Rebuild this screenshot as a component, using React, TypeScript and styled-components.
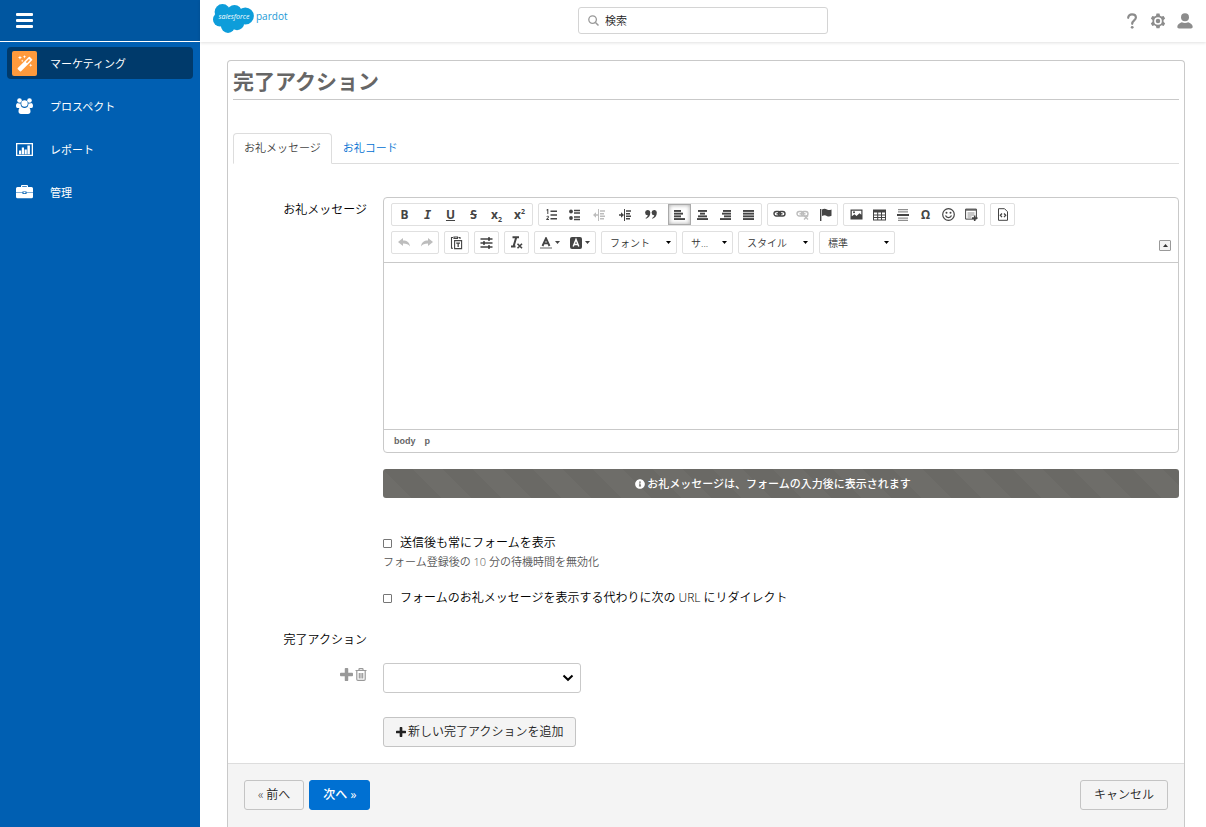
import React from "react";
import styled, { createGlobalStyle, css } from "styled-components";
import { FaInfoCircle } from "react-icons/fa";

const GlobalStyle = createGlobalStyle`
  *, *::before, *::after { box-sizing: border-box; }
  body {
    margin: 0;
    background: #fff;
    color: #000;
    font-family: "Open Sans", "Noto Sans CJK JP", sans-serif;
    font-size: 12px;
    font-weight: 350;
    line-height: 20px;
  }
  button, input, select { font-family: inherit; font-weight: inherit; margin: 0; }
  svg { display: block; flex: none; }
`;

/* ---------- page frame ---------- */

const Page = styled.div`
  display: flex;
  min-height: 100vh;
`;

const Sidebar = styled.aside`
  flex: 0 0 200px;
  background: #005fb2;
`;

const SidebarTop = styled.div`
  display: flex;
  align-items: center;
  height: 42px;
  padding: 0 16px 1px;
  background: #0056a0;
  border-bottom: 1px solid #fff;
`;

const MenuButton = styled.button`
  padding: 0;
  border: 0;
  background: none;
  color: #fff;
  cursor: pointer;
`;

const Nav = styled.nav`
  display: flex;
  flex-direction: column;
  gap: 11px;
  padding: 5px 7px;
`;

const NavLink = styled.a<{ $active?: boolean }>`
  display: flex;
  align-items: center;
  gap: 13px;
  height: 32px;
  padding-left: 5px;
  border-radius: 4px;
  color: #fff;
  font-size: 11px;
  line-height: 22px;
  font-weight: 400;
  text-decoration: none;
  background: ${(p) => (p.$active ? "#003a6b" : "transparent")};
`;

const NavText = styled.span`
  padding-top: 1px;
`;

const NavIcon = styled.span<{ $active?: boolean }>`
  display: flex;
  align-items: center;
  justify-content: center;
  width: 25px;
  height: 25px;
  border-radius: 2px;
  background: ${(p) => (p.$active ? "#ff9a3c" : "transparent")};
`;

const Content = styled.div`
  flex: 1;
  min-width: 0;
  display: flex;
  flex-direction: column;
`;

const TopBar = styled.header`
  display: grid;
  grid-template-columns: 1fr 250px 1fr;
  align-items: center;
  height: 42px;
  padding-bottom: 1px;
  background: #fff;
  box-shadow: 0 1px 3px rgba(0, 0, 0, 0.12);
`;

const Brand = styled.a`
  display: flex;
  align-items: center;
  gap: 2px;
  height: 37px;
  padding-left: 13px;
  align-self: start;
  color: #1b9ad6;
  font-family: "Open Sans", sans-serif;
  font-size: 10px;
  font-weight: 400;
  text-decoration: none;
`;

const BrandName = styled.span`
  padding-bottom: 5px;
`;

const SearchBox = styled.label`
  display: flex;
  align-items: center;
  gap: 6px;
  height: 27px;
  padding: 0 9px;
  border: 1px solid #d4d4d4;
  border-radius: 3px;
`;

const SearchInput = styled.input`
  flex: 1;
  min-width: 0;
  padding: 0;
  border: 0;
  outline: 0;
  font-size: 11px;
  line-height: 20px;
  &::placeholder { color: #222; opacity: 1; }
`;

const Utilities = styled.div`
  display: flex;
  justify-content: flex-end;
  gap: 10px;
  padding-right: 12px;
`;

const UtilityButton = styled.button`
  padding: 0;
  border: 0;
  background: none;
  color: #8c8c8c;
  cursor: pointer;
`;

/* ---------- panel ---------- */

const Panel = styled.form`
  flex: 1;
  display: flex;
  flex-direction: column;
  margin: 18px 21px 0 27px;
  border: 1px solid #c9c9c9;
  border-bottom: 0;
  border-radius: 4px 4px 0 0;
`;

const PanelBody = styled.div`
  padding: 0 5px 16px;
`;

const Title = styled.h1`
  margin: 0 0 33px;
  padding-top: 2px;
  border-bottom: 1px solid #c9c9c9;
  color: #666;
  font-size: 21px;
  line-height: 36px;
  font-weight: 700;
`;

const Tabs = styled.div`
  display: flex;
  height: 31px;
  margin-bottom: 33px;
  border-bottom: 1px solid #ddd;
`;

const Tab = styled.a<{ $active?: boolean }>`
  height: 31px;
  padding: 0 10px;
  border: 1px solid transparent;
  border-radius: 4px 4px 0 0;
  color: #0070d2;
  font-size: 11px;
  line-height: 28px;
  text-decoration: none;
  ${(p) =>
    p.$active &&
    css`
      border-color: #ddd;
      border-bottom-color: #fff;
      background: #fff;
      color: #444;
    `}
`;

const FormRow = styled.div<{ $gap?: number }>`
  display: grid;
  grid-template-columns: 134px minmax(0, 1fr);
  column-gap: 16px;
  margin-top: ${(p) => p.$gap ?? 0}px;
`;

const RowLabel = styled.div<{ $top?: number }>`
  padding-top: ${(p) => p.$top ?? 0}px;
  text-align: right;
`;

const FieldColumn = styled.div`
  grid-column: 2;
`;

/* ---------- editor ---------- */

const Editor = styled.div`
  border: 1px solid #c9c9c9;
  border-radius: 4px;
`;

const Toolbar = styled.div`
  display: flex;
  align-items: flex-end;
  justify-content: space-between;
  padding: 5px 7px 8px;
  border-bottom: 1px solid #c9c9c9;
`;

const ToolRows = styled.div`
  display: flex;
  flex-direction: column;
  gap: 5px;
`;

const ToolRow = styled.div`
  display: flex;
  flex-wrap: wrap;
  gap: 5px;
`;

const ToolGroup = styled.div<{ $tight?: boolean }>`
  display: flex;
  height: 23px;
  padding: 0 ${(p) => (p.$tight ? 0 : 1)}px;
  border: 1px solid #e0e0e0;
  border-radius: 2px;
`;

const ToolButton = styled.button<{ $wide?: boolean; $on?: boolean; $off?: boolean }>`
  display: flex;
  align-items: center;
  justify-content: center;
  gap: 3px;
  width: ${(p) => (p.$wide ? 26 : 23)}px;
  height: 21px;
  padding: 0;
  border: 0;
  background: none;
  color: ${(p) => (p.$off ? "#bdbdbd" : "#444")};
  ${(p) =>
    p.$on &&
    css`
      border: 1px solid #aaa;
      box-shadow: inset 0 0 4px rgba(0, 0, 0, 0.35);
    `}
`;

const ColorButton = styled(ToolButton)`
  width: 30px;
`;

const AlignSet = styled.div`
  display: flex;
  margin-left: 4px;
`;

const Glyph = styled.span<{ $italic?: boolean; $line?: "underline" | "line-through"; $mono?: boolean }>`
  font-family: ${(p) => (p.$mono ? '"DejaVu Sans Mono", monospace' : '"Noto Sans", sans-serif')};
  font-size: 12px;
  line-height: 16px;
  font-weight: 700;
  font-style: ${(p) => (p.$italic ? "italic" : "normal")};
  text-decoration: ${(p) => p.$line ?? "none"};
  sub, sup { font-size: 7px; line-height: 0; }
`;

const ComboWrap = styled.div<{ $small?: boolean }>`
  display: grid;
  align-items: center;
  width: ${(p) => (p.$small ? 51 : 76)}px;
  height: 23px;
  border: 1px solid #e0e0e0;
  border-radius: 2px;
  & > * { grid-area: 1 / 1; }
  & > svg { justify-self: end; margin-right: 5px; pointer-events: none; }
`;

const ComboSelect = styled.select`
  appearance: none;
  width: 100%;
  height: 21px;
  padding: 0 12px 0 8px;
  border: 0;
  background: none;
  color: #333;
  font-size: 10px;
`;

const CollapseButton = styled.button`
  display: flex;
  align-items: center;
  justify-content: center;
  width: 12px;
  height: 11px;
  margin-bottom: 3px;
  padding: 0;
  border: 1px solid #999;
  border-radius: 1px;
  background: #f3f3f3;
  color: #333;
`;

const EditArea = styled.div`
  height: 166px;
  outline: 0;
`;

const ElementPath = styled.div`
  display: flex;
  gap: 9px;
  padding: 0 10px;
  border-top: 1px solid #c9c9c9;
  color: #666;
  font-family: "Liberation Sans", sans-serif;
  font-size: 9px;
  font-weight: 700;
  line-height: 22px;
`;

const Notice = styled.div`
  display: flex;
  align-items: center;
  justify-content: center;
  gap: 2px;
  height: 29px;
  margin: 16px 0 35px;
  padding-right: 16px;
  border-radius: 3px;
  color: #fff;
  font-size: 11px;
  font-weight: 500;
  background-color: #6e6d69;
  background-image: linear-gradient(
    45deg,
    rgba(0, 0, 0, 0.04) 25%,
    transparent 25%,
    transparent 50%,
    rgba(0, 0, 0, 0.04) 50%,
    rgba(0, 0, 0, 0.04) 75%,
    transparent 75%,
    transparent
  );
  background-size: 60px 60px;
`;

/* ---------- fields ---------- */

const CheckLabel = styled.label`
  display: flex;
  align-items: center;
  gap: 8px;
`;

const Check = styled.input`
  appearance: none;
  width: 9px;
  height: 9px;
  border: 1px solid #767676;
  border-radius: 1px;
  background: #fff;
  &:checked { background: #0070d2; }
`;

const Help = styled.p`
  margin: 0 0 17px;
  color: #555;
  font-size: 11px;
  line-height: 18px;
`;

const RowTools = styled.div`
  display: flex;
  justify-content: flex-end;
  gap: 2px;
  padding-top: 4px;
`;

const SmallIconButton = styled.button`
  height: 14px;
  padding: 0;
  border: 0;
  background: none;
  color: #999;
`;

const SelectWrap = styled.div`
  display: grid;
  align-items: center;
  width: 198px;
  & > * { grid-area: 1 / 1; }
  & > svg { justify-self: end; margin-right: 7px; pointer-events: none; }
`;

const ActionSelect = styled.select`
  appearance: none;
  width: 100%;
  height: 30px;
  padding: 0 24px 0 8px;
  border: 1px solid #c9c9c9;
  border-radius: 3px;
  background: #fff;
  font-size: 12px;
`;

const Button = styled.button<{ $primary?: boolean; $snug?: boolean }>`
  display: inline-flex;
  align-items: center;
  justify-content: center;
  gap: 2px;
  height: 30px;
  padding: 0 ${(p) => (p.$snug ? 12 : 13)}px;
  border: 1px solid ${(p) => (p.$primary ? "#0070d2" : "#c4c4c4")};
  border-radius: 3px;
  background: ${(p) => (p.$primary ? "#0070d2" : "#f4f4f4")};
  color: ${(p) => (p.$primary ? "#fff" : "#222")};
  font-size: 12px;
  font-weight: ${(p) => (p.$primary ? 500 : 350)};
  line-height: 20px;
  white-space: nowrap;
  cursor: pointer;
`;

const Footer = styled.footer`
  flex: 1;
  display: flex;
  align-items: flex-start;
  justify-content: space-between;
  padding: 16px;
  border-top: 1px solid #ddd;
  background: #f4f4f4;
`;

const ButtonSet = styled.div`
  display: flex;
  gap: 5px;
`;

/* ---------- drawings ---------- */

const Svg = ({ w = 14, h = 14, box, children }: { w?: number; h?: number; box?: string; children: React.ReactNode }) => (
  <svg width={w} height={h} viewBox={box ?? `0 0 ${w} ${h}`} fill="currentColor" aria-hidden="true">
    {children}
  </svg>
);

const Caret = () => (
  <Svg w={5} h={3}>
    <path d="M0 0h5L2.500 3z" />
  </Svg>
);

const Cloud = () => (
  <svg width="41" height="29" viewBox="0 0 41 29" aria-hidden="true">
    <g fill="#0d9dda">
      <circle cx="9.500" cy="8" r="7.900" />
      <circle cx="21.500" cy="8.200" r="7.300" />
      <circle cx="32.300" cy="12" r="8.600" />
      <circle cx="7" cy="15.500" r="7" />
      <circle cx="15" cy="21.800" r="7.100" />
      <circle cx="24" cy="19" r="7.200" />
      <path d="M9 6h22v14H9z" />
    </g>
    <text x="21" y="15" fill="#fff" fontFamily="Open Sans, sans-serif" fontStyle="italic" fontWeight="400" fontSize="7" textAnchor="middle">
      salesforce
    </text>
  </svg>
);

const Lines = ({ rows }: { rows: [number, number][] }) => (
  <Svg w={11} h={10}>
    {rows.map(([x, w], i) => (
      <rect key={i} x={x} y={i * 2.7} width={w} height="1.9" />
    ))}
  </Svg>
);

const alignments = [
  { name: "左揃え", rows: [[0, 7], [0, 9], [0, 7], [0, 11]] },
  { name: "中央揃え", rows: [[1, 9], [3, 5], [1, 9], [0, 11]] },
  { name: "右揃え", rows: [[3, 8], [2, 9], [4, 7], [0, 11]] },
  { name: "両端揃え", rows: [[0, 11], [0, 11], [0, 11], [0, 11]] },
] as { name: string; rows: [number, number][] }[];

const NumberedIcon = () => (
  <Svg w={12} h={12}>
    <path d="M4.500 1.500H11V3H4.500zM4.500 5.200H11v1.500H4.500zM4.500 9H11v1.500H4.500zM1.300 0h1v5h-1V1.500H.5V.8zM.4 7.500C.8 6.300 3 6.400 2.900 8c0 .8-.8 1.500-1.200 2.100H3v1H.2v-.8C1 9.300 1.900 8.500 1.900 8c0-.6-.7-.5-.9 0z" />
  </Svg>
);

const BulletIcon = () => (
  <Svg w={12} h={12}>
    <circle cx="2" cy="2.500" r="1.900" />
    <circle cx="2" cy="9" r="1.900" />
    <path d="M5 .7h6v1.500H5zM5 3.200h6v1.500H5zM5 7.200h6v1.500H5zM5 9.700h6v1.500H5z" />
  </Svg>
);

const IndentIcon = ({ out }: { out?: boolean }) => (
  <Svg w={12} h={12}>
    <path d="M5 0h1v12H5zM7 1.300h5v1.500H7zM7 3.900h4v1.500H7zM7 6.500h5V8H7zM7 9.100h4v1.500H7z" />
    <path d={out ? "M0 6l3-2.800v2h2v1.600H3v2z" : "M5 6L2 3.200v2H0v1.600h2v2z"} />
  </Svg>
);

const QuoteIcon = () => (
  <Svg w={12} h={9}>
    <path d="M2.600 0a2.600 2.600 0 0 1 2.700 2.800C5.300 5.600 3.800 8 1 8.800L.5 8c1.400-.6 2.200-1.600 2.300-2.800A2.600 2.600 0 1 1 2.600 0zM9.100 0a2.600 2.600 0 0 1 2.700 2.800c0 2.800-1.500 5.200-4.300 6L7 8c1.400-.6 2.200-1.600 2.300-2.800A2.600 2.600 0 1 1 9.100 0z" />
  </Svg>
);

const ChainIcon = ({ cut }: { cut?: boolean }) => (
  <Svg w={13} h={11}>
    <g fill="none" stroke="currentColor" strokeWidth="1.400">
      <rect x="1" y="2.500" width="6.500" height="4.500" rx="2.200" />
      <rect x="5.500" y="2.500" width="6.500" height="4.500" rx="2.200" />
      <path d="M3.500 4.800h6" />
      {cut && <path d="M8 6.500l4 4M12 6.500l-4 4" />}
    </g>
  </Svg>
);

const FlagIcon = () => (
  <Svg w={13} h={13}>
    <path d="M1 1h1.400v12H1zM3 1.500c2-1.200 3.500-.8 5 0s2.500.8 4.500 0v6.300c-2 1-3.300.8-4.700.1s-2.800-.8-4.800.2z" />
  </Svg>
);

const ImageIcon = () => (
  <Svg w={13} h={11}>
    <path fillRule="evenodd" d="M.5.500h12v10H.5zM1.800 1.800v5.400l2.700-2 2 1.800 3-2.800 1.800 1.500V1.800z" />
    <circle cx="4" cy="3.300" r="1" />
  </Svg>
);

const TableIcon = () => (
  <Svg w={13} h={12}>
    <path fillRule="evenodd" d="M0 .5h13v11H0zM1 3.500v2h3.200v-2zm4.200 0v2h2.800v-2zm3.800 0v2h3v-2zM1 6.500V8h3.200V6.500zm4.200 0V8h2.800V6.500zm3.800 0V8h3V6.500zM1 9v1.500h3.200V9zm4.200 0v1.500h2.800V9zM9 9v1.500h3V9z" />
  </Svg>
);

const RuleIcon = () => (
  <Svg w={12} h={12}>
    <path opacity=".6" d="M1 0h10v1.300H1zM1 2.200h10v1.300H1zM1 8.500h10v1.300H1zM1 10.700h10V12H1z" />
    <path d="M0 5h12v2H0z" />
  </Svg>
);

const SmileIcon = () => (
  <Svg w={13} h={13}>
    <circle cx="6.500" cy="6.500" r="5.800" fill="none" stroke="currentColor" strokeWidth="1.200" />
    <circle cx="4.500" cy="4.800" r="1" />
    <circle cx="8.500" cy="4.800" r="1" />
    <path d="M3.500 7.500c1 2.700 5 2.700 6 0" fill="none" stroke="currentColor" strokeWidth="1.200" />
  </Svg>
);

const SnippetIcon = () => (
  <Svg w={13} h={13}>
    <path d="M.6 1.100h10.800v10H.6z" fill="none" stroke="currentColor" />
    <path opacity=".6" d="M1 1h10v2H1zM2.500 4.500h7v1h-7zM2.500 6.500h7v1h-7zM2.500 8.500h4v1h-4z" />
    <path d="M8.900 7.500h1.600V9.300h2v1.600h-2v2H8.900v-2H7V9.300h1.900z" />
  </Svg>
);

const SourceIcon = () => (
  <Svg w={12} h={13}>
    <path d="M1.500.7h6l3 3v8.600h-9z" fill="none" stroke="currentColor" />
    <path d="M5 5.500L3.300 7.300 5 9.100M7 5.500l1.700 1.800L7 9.100" fill="none" stroke="currentColor" strokeWidth="1.300" />
  </Svg>
);

const ArrowIcon = ({ back }: { back?: boolean }) => (
  <Svg w={12} h={9}>
    <path d={back ? "M5 0v2.500c4 0 6.500 1.800 7 6-1.500-2.200-3.500-2.900-7-2.900V8L0 4z" : "M7 0v2.500c-4 0-6.500 1.800-7 6 1.500-2.200 3.500-2.900 7-2.900V8l5-4z"} />
  </Svg>
);

const PasteIcon = () => (
  <Svg w={13} h={14}>
    <path d="M3 1.500H1.500v10.800H3M8.500 1.500H10V3M4 2.500V1h3.500v1.500z" fill="none" stroke="currentColor" strokeWidth="1.100" />
    <path d="M4.600 4.600h7v8h-7z" fill="none" stroke="currentColor" strokeWidth="1.100" />
    <path d="M6.200 6.500H10v1.300H8.800v3.300H7.500V7.800H6.200z" />
  </Svg>
);

const SlidersIcon = () => (
  <Svg w={13} h={12}>
    <path d="M.5 1.200h12v1.600H.5zM.5 5.200h12v1.600H.5zM.5 9.200h12v1.600H.5z" />
    <path d="M8 .2h2v3.600H8zM3 4.200h2v3.600H3zM8 8.200h2v3.600H8z" />
  </Svg>
);

const ClearFormatIcon = () => (
  <Svg w={13} h={13}>
    <path d="M2.500 1.200H9M1 10.500h4.500M6.200 1.500L3.600 10.300" fill="none" stroke="currentColor" strokeWidth="2" />
    <path d="M7.500 7.800l4.500 4.500M12 7.800l-4.500 4.500" fill="none" stroke="currentColor" strokeWidth="1.600" />
  </Svg>
);

const PlusIcon = ({ size = 12 }: { size?: number }) => (
  <Svg w={size} h={size} box="0 0 12 12">
    <path d="M4.400.800q0-.8.800-.8h1.600q.8 0 .8.800v3.600h3.600q.8 0 .8.800v1.600q0 .8-.8.800H7.600v3.600q0 .8-.8.800H5.200q-.8 0-.8-.8V7.600H.8Q0 7.600 0 6.800V5.200q0-.8.800-.8h3.600z" />
  </Svg>
);

const TrashIcon = () => (
  <Svg w={12} h={13}>
    <path d="M.5 2.500h11M4 2.500v-1.200Q4 .6 4.700.6h2.600q.7 0 .7.700v1.200M1.800 3v8.200q0 1.200 1.200 1.200h6q1.200 0 1.200-1.200V3M4.300 5v5.500M6 5v5.500M7.700 5v5.500" fill="none" stroke="currentColor" strokeWidth="1.200" />
  </Svg>
);

const navItems = [
  {
    label: "マーケティング",
    active: true,
    icon: (
      <Svg w={17} h={17} box="0 0 15 15">
        <path fillRule="evenodd" d="M11.300 1.800q.5-.5 1 0l1.900 1.900q.5.500 0 1L4.500 14.400q-.5.500-1 0L1.600 12.500q-.5-.5 0-1zM11.400 3.500L8.700 6.200l1 1 2.700-2.700z" />
        <path d="M3.500.5l.5 1.300 1.300.5L4 2.800l-.5 1.300L3 2.800l-1.300-.5L3 1.800zM7.500 0l.4 1.100 1.100.4-1.100.4L7.500 3l-.4-1.100L6 1.500l1.100-.4zM13 7.500l.4 1.100 1.100.4-1.100.4L13 10.500l-.4-1.100-1.100-.4 1.100-.4zM5.500 4l.3.900.9.300-.9.300-.3.900-.3-.9-.9-.3.900-.3z" />
      </Svg>
    ),
  },
  {
    label: "プロスペクト",
    icon: (
      <Svg w={17} h={16}>
        <circle cx="3.500" cy="2.500" r="2.300" />
        <circle cx="13.500" cy="2.500" r="2.300" />
        <circle cx="8.500" cy="5.500" r="3.200" />
        <path d="M0 8c0-2 .8-3 2-3 .8.600 1.700.7 2.600.4C4.500 7 5 8 5.700 8.700c-1 .3-1.600.8-2 1.300H1.500Q0 10 0 8zM17 8c0-2-.8-3-2-3-.8.600-1.700.7-2.600.4C12.500 7 12 8 11.300 8.700c1 .3 1.600.8 2 1.300h2.200Q17 10 17 8zM2.500 13.500c0-2.800 1-4.400 3.200-4.400 1.700 1.300 3.900 1.300 5.600 0 2.200 0 3.200 1.600 3.200 4.400 0 1.600-1 2.500-2.500 2.500H5c-1.500 0-2.500-.9-2.500-2.500z" />
      </Svg>
    ),
  },
  {
    label: "レポート",
    icon: (
      <Svg w={17} h={13}>
        <path fillRule="evenodd" d="M0 0h17v13H0zM1.300 1.300v10.400h14.400V1.300z" />
        <path d="M3 7.500h2.200v3.700H3zM5.800 4.500H8v6.700H5.800zM8.600 6.500h2.200v4.700H8.600zM11.400 2.500h2.500v8.700h-2.500z" />
      </Svg>
    ),
  },
  {
    label: "管理",
    icon: (
      <Svg w={17} h={14}>
        <path fillRule="evenodd" d="M5 2V1q0-1 1-1h5q1 0 1 1v1h3.500Q17 2 17 3.500V7h-6.500V6.500h-4V7H0V3.500Q0 2 1.500 2zM6.200 1.200V2h4.600v-.8zM0 7.600h6.500v1.400h4V7.600H17v4.100q0 1.500-1.500 1.500h-14Q0 13.200 0 11.700zM7.500 6.900h2v1.300h-2z" />
      </Svg>
    ),
  },
];

const Combo = ({ name, value, small }: { name: string; value: string; small?: boolean }) => (
  <ComboWrap $small={small}>
    <ComboSelect aria-label={name}>
      <option>{value}</option>
    </ComboSelect>
    <Caret />
  </ComboWrap>
);

const Tool = ({ name, children, ...rest }: { name: string; children: React.ReactNode; $wide?: boolean; $on?: boolean; $off?: boolean }) => (
  <ToolButton type="button" aria-label={name} {...rest}>
    {children}
  </ToolButton>
);

const MessageEditor = () => (
  <Editor>
    <Toolbar>
      <ToolRows>
        <ToolRow>
          <ToolGroup>
            <Tool name="太字"><Glyph>B</Glyph></Tool>
            <Tool name="斜体"><Glyph $mono $italic>I</Glyph></Tool>
            <Tool name="下線"><Glyph $line="underline">U</Glyph></Tool>
            <Tool name="打ち消し線"><Glyph $line="line-through">S</Glyph></Tool>
            <Tool name="下付き"><Glyph>x<sub>2</sub></Glyph></Tool>
            <Tool name="上付き"><Glyph>x<sup>2</sup></Glyph></Tool>
          </ToolGroup>
          <ToolGroup>
            <Tool name="番号付きリスト"><NumberedIcon /></Tool>
            <Tool name="箇条書き"><BulletIcon /></Tool>
            <Tool name="インデント解除" $wide $off><IndentIcon out /></Tool>
            <Tool name="インデント" $wide><IndentIcon /></Tool>
            <Tool name="引用" $wide><QuoteIcon /></Tool>
            <AlignSet>
              {alignments.map((a, i) => (
                <Tool key={a.name} name={a.name} $on={i === 0}><Lines rows={a.rows} /></Tool>
              ))}
            </AlignSet>
          </ToolGroup>
          <ToolGroup $tight>
            <Tool name="リンク"><ChainIcon /></Tool>
            <Tool name="リンク解除" $off><ChainIcon cut /></Tool>
            <Tool name="アンカー"><FlagIcon /></Tool>
          </ToolGroup>
          <ToolGroup>
            <Tool name="画像"><ImageIcon /></Tool>
            <Tool name="表"><TableIcon /></Tool>
            <Tool name="水平線"><RuleIcon /></Tool>
            <Tool name="特殊文字"><Glyph>Ω</Glyph></Tool>
            <Tool name="絵文字"><SmileIcon /></Tool>
            <Tool name="コンテンツ挿入"><SnippetIcon /></Tool>
          </ToolGroup>
          <ToolGroup $tight>
            <Tool name="ソース"><SourceIcon /></Tool>
          </ToolGroup>
        </ToolRow>
        <ToolRow>
          <ToolGroup $tight>
            <Tool name="元に戻す" $off><ArrowIcon back /></Tool>
            <Tool name="やり直す" $off><ArrowIcon /></Tool>
          </ToolGroup>
          <ToolGroup $tight>
            <Tool name="テキストとして貼り付け"><PasteIcon /></Tool>
          </ToolGroup>
          <ToolGroup $tight>
            <Tool name="変数"><SlidersIcon /></Tool>
          </ToolGroup>
          <ToolGroup $tight>
            <Tool name="書式解除"><ClearFormatIcon /></Tool>
          </ToolGroup>
          <ToolGroup $tight>
            <ColorButton type="button" aria-label="文字色">
              <Svg w={12} h={12}>
                <path d="M2.500 9L6 1.300 9.500 9M4 6.400h4" fill="none" stroke="currentColor" strokeWidth="1.900" />
                <path opacity=".6" d="M0 10.300h12v1.400H0z" />
              </Svg>
              <Caret />
            </ColorButton>
            <ColorButton type="button" aria-label="背景色">
              <Svg w={12} h={12}>
                <rect width="12" height="12" rx="2" />
                <path d="M3.200 9.500L6 2.500l2.800 7M4.200 7.400h3.600" fill="none" stroke="#fff" strokeWidth="1.500" />
              </Svg>
              <Caret />
            </ColorButton>
          </ToolGroup>
          <Combo name="フォント" value="フォント" />
          <Combo name="サイズ" value="サ..." small />
          <Combo name="スタイル" value="スタイル" />
          <Combo name="書式" value="標準" />
        </ToolRow>
      </ToolRows>
      <CollapseButton type="button" aria-label="ツールバーを折りたたむ">
        <Svg w={5} h={3}>
          <path d="M0 3h5L2.500 0z" />
        </Svg>
      </CollapseButton>
    </Toolbar>
    <EditArea contentEditable suppressContentEditableWarning role="textbox" aria-label="お礼メッセージ" />
    <ElementPath>
      <span>body</span>
      <span>p</span>
    </ElementPath>
  </Editor>
);

export default function App() {
  return (
    <>
      <GlobalStyle />
      <Page>
        <Sidebar>
          <SidebarTop>
            <MenuButton type="button" aria-label="メニュー">
              <Svg w={17} h={15}>
                <rect width="17" height="3" rx="1" />
                <rect y="6" width="17" height="3" rx="1" />
                <rect y="12" width="17" height="3" rx="1" />
              </Svg>
            </MenuButton>
          </SidebarTop>
          <Nav>
            {navItems.map((item) => (
              <NavLink key={item.label} href="#" $active={item.active}>
                <NavIcon $active={item.active}>{item.icon}</NavIcon>
                <NavText>{item.label}</NavText>
              </NavLink>
            ))}
          </Nav>
        </Sidebar>
        <Content>
          <TopBar>
            <Brand href="#">
              <Cloud />
              <BrandName>pardot</BrandName>
            </Brand>
            <SearchBox>
              <Svg w={11} h={11}>
                <circle cx="4.600" cy="4.600" r="3.800" fill="none" stroke="#999" strokeWidth="1.300" />
                <path d="M7.500 7.500l3 3" stroke="#999" strokeWidth="1.500" />
              </Svg>
              <SearchInput type="search" placeholder="検索" aria-label="検索" />
            </SearchBox>
            <Utilities>
              <UtilityButton type="button" aria-label="ヘルプ">
                <Svg w={16} h={16} box="-2 0 16 16">
                  <path d="M2.200 4.800C2.200 2.700 3.800 1.400 6 1.400s3.900 1.300 3.900 3.200c0 2.800-3.700 2.900-3.700 6.200" fill="none" stroke="currentColor" strokeWidth="2.200" strokeLinecap="round" />
                  <circle cx="6.200" cy="14.300" r="1.400" />
                </Svg>
              </UtilityButton>
              <UtilityButton type="button" aria-label="設定">
                <Svg w={16} h={16} box="1 0 14 15">
                  <path fillRule="evenodd" d="M6.600.5h2.800l.5 2 1.400.8 2-.6 1.400 2.400L13.200 6.600v1.700l1.500 1.500-1.400 2.400-2-.6-1.400.8-.5 2H6.600l-.5-2-1.400-.8-2 .6-1.400-2.400 1.500-1.500V6.600L1.300 5.100l1.400-2.400 2 .6 1.400-.8zM8 3.900a3.600 3.600 0 1 0 0 7.200 3.600 3.600 0 0 0 0-7.200z" />
                  <circle cx="8" cy="7.500" r="2.100" />
                </Svg>
              </UtilityButton>
              <UtilityButton type="button" aria-label="アカウント">
                <Svg w={18} h={16}>
                  <circle cx="9" cy="4.200" r="4" />
                  <path d="M1.300 13.800c0-2.300 2.300-3.900 4.500-4.600 2 1 4.400 1 6.400 0 2.200.7 4.500 2.300 4.500 4.600 0 1.100-.8 1.700-1.700 1.700H3c-.9 0-1.700-.6-1.700-1.700z" />
                </Svg>
              </UtilityButton>
            </Utilities>
          </TopBar>
          <Panel onSubmit={(e) => e.preventDefault()}>
            <PanelBody>
              <Title>完了アクション</Title>
              <Tabs>
                <Tab href="#message" $active>お礼メッセージ</Tab>
                <Tab href="#code">お礼コード</Tab>
              </Tabs>
              <FormRow>
                <RowLabel $top={3}>お礼メッセージ</RowLabel>
                <FieldColumn>
                  <MessageEditor />
                  <Notice>
                    <FaInfoCircle size={10} />
                    お礼メッセージは、フォームの入力後に表示されます
                  </Notice>
                  <CheckLabel>
                    <Check type="checkbox" />
                    送信後も常にフォームを表示
                  </CheckLabel>
                  <Help>フォーム登録後の 10 分の待機時間を無効化</Help>
                  <CheckLabel>
                    <Check type="checkbox" />
                    フォームのお礼メッセージを表示する代わりに次の URL にリダイレクト
                  </CheckLabel>
                </FieldColumn>
              </FormRow>
              <FormRow $gap={22}>
                <RowLabel as="label" htmlFor="completion-action">完了アクション</RowLabel>
              </FormRow>
              <FormRow $gap={13}>
                <RowTools>
                  <SmallIconButton type="button" aria-label="追加"><PlusIcon size={13} /></SmallIconButton>
                  <SmallIconButton type="button" aria-label="削除"><TrashIcon /></SmallIconButton>
                </RowTools>
                <SelectWrap>
                  <ActionSelect id="completion-action">
                    <option value="" />
                  </ActionSelect>
                  <Svg w={12} h={8}>
                    <path d="M1.500 1.500L6 5.800l4.500-4.300" fill="none" stroke="#000" strokeWidth="2" />
                  </Svg>
                </SelectWrap>
              </FormRow>
              <FormRow $gap={24}>
                <FieldColumn>
                  <Button type="button" $snug>
                    <PlusIcon size={10} />
                    新しい完了アクションを追加
                  </Button>
                </FieldColumn>
              </FormRow>
            </PanelBody>
            <Footer>
              <ButtonSet>
                <Button type="button">« 前へ</Button>
                <Button type="submit" $primary>次へ »</Button>
              </ButtonSet>
              <Button type="button">キャンセル</Button>
            </Footer>
          </Panel>
        </Content>
      </Page>
    </>
  );
}
